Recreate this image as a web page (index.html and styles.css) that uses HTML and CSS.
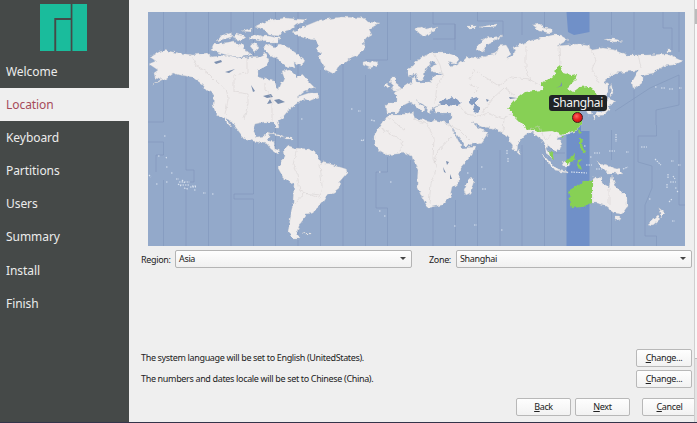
FILE: index.html
```html
<!DOCTYPE html>
<html lang="en">
<head>
<meta charset="utf-8">
<title>Installer - Location</title>
<link rel="stylesheet" href="styles.css">
</head>
<body>
<div class="window">
  <aside class="sidebar">
    <svg class="logo" viewBox="0 0 47 47"><path d="M0 0H30.700V14H14.300V47H0ZM16.200 16H30.700V47H16.200ZM32.400 0H47V47H32.400Z"/></svg>
    <nav class="steps">
      <div class="step">Welcome</div>
      <div class="step active">Location</div>
      <div class="step">Keyboard</div>
      <div class="step">Partitions</div>
      <div class="step">Users</div>
      <div class="step">Summary</div>
      <div class="step">Install</div>
      <div class="step">Finish</div>
    </nav>
  </aside>
  <main class="content">
    <div class="map">
      <svg class="world" viewBox="148 12 537 234">
        <filter id="coast" filterUnits="userSpaceOnUse" x="148" y="12" width="537" height="234">
          <feTurbulence type="fractalNoise" baseFrequency=".22" numOctaves="2" seed="4"/>
          <feDisplacementMap in="SourceGraphic" scale="4.500" xChannelSelector="R" yChannelSelector="G"/>
        </filter>
        <rect class="sea" x="148" y="12" width="537" height="234"/>
        <path class="band" d="M566.500 12H589.500V32L582 33.500L574 35L568 32ZM566.500 130L581 121V131H589.500V246H566.500Z"/>
        <path class="zones" d="M163.500 12V122H148M148 142H163.500V155H156V172M163.500 180V246M186 12V170H194V182H186V246M208.500 12V246M231 12V246M253.500 12V194H234V199H253.500V246M275.500 12V246M298 12V246M320.500 70V246M343 60V246M365.500 75V246M387.500 12V60H365.500M387.500 157V172H376V208H387.500V246M410.500 12V60M410.500 160V246M433 12V24H455V39H433M433 205V246M455 24V50M455.500 200V246M477.500 12V21H503V36M477.500 150V246M500 150V246M522 12V35M522 145V246M544.500 12V30M544.500 155V246M611.500 12V35M611.500 130V160M611.500 210V246M634 12V50M634 90V246M656.500 125V136H638V162L652 166V188L645 205V236H656.500V246M679 12V52M679 75L650 88L615 111M679 75V105L656 110V125M679 130V205H685M663 12V28H672V50M545 140V153H565"/>
        <g class="land">
          <path d="M150 57L158 52L165 50.500L178 53L193 55L207 53L212 57L227 55L240 58L257 57.500L265 53L269 61L265 67L258 70L258 77L269 80L274 81L276 88L279 89L281 84L284 77L282 72L290 70L297 77L302 74L309 82L315 88L304 91L297 97L309 93L318 93L319 97L309 101L305 99L300 102L294 106L287 112L282 118L277 121L279 128L276 128L273 122L264 122L255 124L253 130L257 137L264 136L268 132L271 133L267 140L274 142L275 149L281 151L278 154L271 149L267 144L253 141L243 137L237 129L230 120L226 118L232 127L228 124L222 117L216 114L213 105L214 95L207 90L202 84L192 77L179 75L173 73L165 79L152 85L162 79L155 77L154 73L158 70L149 64L156 61Z"/>
          <path d="M211 50L214 43L223 44L234 42L242 45L247 52L252 55L240 57L227 55L216 52ZM217 41L222 35L231 32L232 37L224 39ZM232 38L236 34L246 37L241 41ZM242 31L252 28L252 32ZM250 38L255 34L264 37L260 41ZM256 27L268 21L285 18L307 20L296 25L290 30L282 32L280 36L269 35L265 30ZM259 37L267 36L280 38L278 42L265 42ZM250 46L256 43L259 48L255 52ZM263 47L269 44L275 48L280 44L289 48L304 59L302 66L294 62L295 68L286 66L278 59L269 54Z"/>
          <path d="M292 33L303 27L320 20L341 17L364 18L368 22L380 23L369 29L372 35L367 38L363 43L365 50L360 54L350 58L343 64L338 67L334 74L326 70L321 62L319 55L321 53L316 50L319 46L315 40L304 38Z"/>
          <path d="M363 62L368 61L377 62L378 65L370 68L363 65ZM415 28L422 27L426 30L439 27L432 31L424 37L418 32ZM384 86L387 83L390 87L387 89ZM391 77L396 77L396 84L401 88L400 91L392 91L394 86L390 82ZM476 50L479 43L486 38L502 36L495 40L487 44L483 51ZM467 26H476V28H467ZM480 27L496 24L497 26L484 28ZM533 25L540 24L544 28L553 29L550 33L540 31ZM604 39L613 39L623 41L614 42ZM667 50H671V52H667Z"/>
          <path d="M283 150L289 146L295 148L309 149L316 154L321 162L330 164L346 169L347 173L340 181L339 188L334 192L327 195L322 203L316 208L313 213L306 214L304 220L299 226L297 233L300 239L294 239L288 233L290 220L293 202L294 185L288 181L283 177L278 168L281 162L284 156Z"/>
          <path d="M387 113L386 104L388 102L397 102L397 95L393 93L401 89L404 86L412 83L411 78L415 77L417 83L430 83L433 77L442 73L433 72L430 68L437 64L431 62L425 70L424 78L420 81L415 74L409 77L407 73L407 69L413 66L420 58L433 52L445 52L458 57L459 61L453 64L447 61L452 66L462 62L467 57L475 58L483 57L497 53L499 46L506 45L511 53L506 60L515 53L513 47L533 40L553 35L560 35L568 40L557 46L578 44L590 46L592 50L603 48L615 50L627 55L647 55L667 54L682 61L673 65L664 66L653 73L642 75L642 82L633 89L632 82L639 70L626 72L614 73L604 81L608 84L608 93L603 99L597 104L590 108L592 115L588 115L585 107L578 108L582 117L582 123L577 130L568 134L557 137L562 143L560 149L555 152L548 145L547 149L553 158L550 158L546 152L545 146L542 140L537 137L532 132L525 135L518 143L517 151L514 151L508 137L503 133L500 132L493 128L482 127L472 122L478 128L488 133L482 142L465 146L457 135L448 122L452 118L452 113L435 113L433 108L442 105L433 107L430 113L424 105L415 100L425 108L422 113L417 107L410 102L402 106L398 113Z"/>
          <path d="M388 115L400 115L413 112L415 118L430 122L435 120L449 123L457 138L462 148L475 147L472 155L460 168L459 182L452 188L450 197L442 205L428 208L422 197L417 185L418 170L413 160L412 156L405 153L396 154L387 155L379 150L374 144L374 135L380 127ZM473 177L474 181L470 193L466 195L464 190L467 183Z"/>
          <path d="M611 84L613 93L610 97ZM608 98L615 102L609 105L609 110L603 115L595 116L595 119L592 117L597 113L605 110ZM541 154L547 158L558 170L568 172V173L555 171L549 163ZM562 161L570 163L569 166L564 166ZM596 162L604 165L618 169L623 174L615 173L607 173L600 166ZM519 149L521 153L518 154ZM592 179L595 177L602 178L602 183L609 187L612 176L616 187L627 197L627 207L622 214L615 213L604 205L596 203L592 203ZM615 217H620L618 221ZM657 216L660 219L653 225L648 224ZM659 208L665 213L661 217ZM269 133L279 134L285 137L278 136ZM285 137H292V139H286ZM303 233H311V234H305Z"/>
        </g>
        <path class="seas" d="M440 102L445 98L448 100L452 97L461 103L457 106L447 105L441 106ZM470 99L476 97L479 99L475 103L480 110L478 113L473 112L475 107L470 103Z"/>
        <path class="lakes" d="M263 96L271 94L273 97L267 98ZM267 104L270 99L272 103ZM274 100L279 99L285 102L278 104ZM251 85L255 91L253 92ZM214 62L221 60L222 62L216 64ZM225 72L235 69L229 73ZM446 161L449 162L447 165ZM443 167L446 173L444 172ZM450 174L452 179L450 179ZM486 99L489 100L487 102ZM509 97L517 98L510 99Z"/>
        <g class="selected">
          <path d="M508 108L514 101L520 96L525 92L534 91L543 90L541 83L548 80L555 75L556 68L560 65L563 73L570 75L577 74L575 80L567 88L573 92L580 87L588 86L592 88L598 95L593 103L585 108L578 108L582 117L582 123L577 130L570 132L562 135L552 131L540 132L527 129L520 122L514 116Z"/>
          <path d="M568 191L578 185L585 181L592 180V203L582 207L572 208ZM549 151L553 154L554 160L550 157ZM565 161L575 153L574 162L567 164ZM579 138L583 138L582 145L586 152L583 153L579 145ZM582 148L586 151L584 154ZM578 161L583 160L579 163L582 169L578 167L577 164ZM578 130L581 132L579 134ZM561 136L564 136L562 138Z"/>
        </g>
        <path class="lakes" d="M556 88L560 86L562 82L562 86Z"/>
        <path class="borders" d="M190 54L197 66L207 72L217 82L227 91L228 100L225 115M247 57V73L234 75V92L248 94V104L244 119M265 83V90L272 98V120M297 148L293 165L297 173L300 191L319 198L322 186L320 164L325 161M320 195L304 193L295 203M413 119L427 124L434 138L433 159L437 167L431 183L429 204M379 127L403 141L400 152M434 53L440 65L443 77L437 85L435 103M470 79L474 70L499 86L511 77L529 79L541 86M526 46L526 68L530 80M559 46L560 65M590 47L596 60L592 69L599 83M638 54L641 68M505 88L515 96M470 85L480 88L473 93M458 104L466 114L479 116L488 113L503 119L512 113M447 124L459 130L470 141M504 118L503 132M529 129L539 126L545 139L552 134M609 188V204M387 116L405 131M504 88L492 99L482 113M451 137L438 151L434 163"/>
        <path class="isles" d="M158 156h2M166 167h2M149 175l2 2M156 184h2M166 182h2M176 179h3M179 182h8M182 180l3 3M187 182h3M180 185h9M190 187h6M192 186h4M178 184l3 2M184 188l4 1M194 190h2M203 193h3M212 194h2M361 140l2 1l1-2M351 109h2M358 111h3M379 172h2M379 211h2M384 216h2M390 182h2M467 173h2M481 167h2M482 189h4M454 226h2M474 225h3M501 230h2M507 150v5M508 158v5M584 146h2M616 134v8M590 157h2M594 153h6M609 151h6M626 152h3M641 147h6M655 159l6 6M671 161h3M678 165h3M668 174v4M673 176l2 3M667 184v5M675 188h2M670 182h6M669 202l3-3M649 199h2M672 221h3M655 87h2M661 88h4M669 89h4M679 88h3M164 136h2M166 157l1 2M171 173h2M571 172l16 1M586 165h6M596 169h6M623 169l5-2M301 119h2M677 191l1 1M371 120l4 1"/>
      </svg>
      <div class="tooltip">Shanghai</div>
      <div class="pin"></div>
    </div>
    <div class="selectors">
      <span class="label region-label">Region:</span>
      <div class="select region">Asia<i class="arrow"></i></div>
      <span class="label zone-label">Zone:</span>
      <div class="select zone">Shanghai<i class="arrow"></i></div>
    </div>
    <div class="locales">
      <div class="row"><span>The system language will be set to English (UnitedStates).</span><div class="button change"><u>C</u>hange...</div></div>
      <div class="row"><span>The numbers and dates locale will be set to Chinese (China).</span><div class="button change"><u>C</u>hange...</div></div>
    </div>
    <div class="actions">
      <div class="button"><u>B</u>ack</div>
      <div class="button"><u>N</u>ext</div>
      <div class="button cancel"><u>C</u>ancel</div>
    </div>
  </main>
  <div class="edge"><div class="edge-cap"></div><div class="edge-thumb"></div><div class="edge-track"></div><div class="edge-foot"></div></div>
</div>
</body>
</html>
```

FILE: styles.css
```css
* { box-sizing: border-box; }
body { margin: 0; background: #efefef; font-family: "Noto Sans", sans-serif; font-size: 9px; letter-spacing: -.34px; color: #222; }
.window { display: flex; width: 697px; height: 423px; overflow: hidden; border-bottom: 1px solid #33344a; }
.sidebar { flex: none; width: 129px; padding-top: 4px; background: #454948; }
.logo { display: block; width: 47px; height: 47px; margin-left: 40px; fill: #1abc9c; }
.steps { margin-top: 4px; }
.step { height: 33.100px; padding-left: 6px; line-height: 34px; font-size: 12px; letter-spacing: -.06px; color: #ececec; }
.step.active { background: #efefef; color: #a64b5a; }
.content { flex: none; width: 565px; padding: 12px 0 0 12px; overflow: hidden; }
.map { position: relative; width: 537px; height: 234px; margin-left: 7px; }
.world { display: block; width: 537px; height: 234px; }
.sea { fill: #93a9ca; }
.band { fill: #7090c8; }
.zones { fill: none; stroke: #7f96ba; stroke-width: .6; }
.land { fill: #f0eded; stroke: #c3c5cc; stroke-width: .3; filter: url(#coast) drop-shadow(0 .5px .7px #60779c); }
.seas { fill: #869dc2; filter: url(#coast); }
.lakes { fill: #7b8faf; }
.selected { fill: #87d055; filter: url(#coast); }
.borders { fill: none; stroke: #d3cfcf; stroke-width: .5; filter: url(#coast); }
.isles { fill: none; stroke: #dae3ef; stroke-width: 1.100; stroke-dasharray: 1.500 1; }
.tooltip { position: absolute; left: 401px; top: 83px; width: 58px; height: 16px; border-radius: 3px; background: #202326; color: #f4f4f4; font-size: 12px; letter-spacing: -.35px; line-height: 15px; text-align: center; }
.pin { position: absolute; left: 424px; top: 100px; width: 11px; height: 11px; border: 1px solid #421919; border-radius: 50%; background: radial-gradient(circle at 40% 35%, #ff6961, #e62222 45%, #bd1212); }
.selectors { display: flex; align-items: center; height: 18px; margin-top: 4px; }
.region-label { width: 34px; }
.select { position: relative; height: 18px; border: 1px solid #b4b4b4; border-radius: 2px; background: linear-gradient(#fefefe, #f0f0f0); line-height: 16px; padding-left: 3px; }
.region { width: 237px; }
.zone-label { width: 27px; margin-left: 17px; }
.zone { width: 236px; }
.arrow { position: absolute; right: 5px; top: 6px; border: 3px solid transparent; border-top-color: #444; border-bottom: 0; }
.locales { display: flex; flex-direction: column; gap: 3px; margin-top: 81px; }
.row { display: flex; align-items: center; justify-content: space-between; width: 551px; height: 18px; }
.row > span { position: relative; top: -1px; }
.button { flex: none; width: 55px; height: 18px; border: 1px solid #b8b8b8; border-radius: 2px; background: linear-gradient(#fefefe, #f2f2f2); line-height: 16px; text-align: center; }
.change { width: 56px; }
.button u { text-underline-offset: 1px; }
.actions { display: flex; gap: 4px; margin: 10px 0 0 375px; }
.cancel { margin-left: 8px; }
.edge { display: flex; flex-direction: column; width: 3px; border-left: 1px solid #cfcfcf; background: #f8f8f8; }
.edge-cap { height: 9px; }
.edge-thumb { height: 15px; border: 1px solid #bcbcbc; background: #e4e4e4; }
.edge-track { flex: 1; }
.edge-foot { height: 64px; border-top: 1px solid #bcbcbc; background: #e4e4e4; }
```
